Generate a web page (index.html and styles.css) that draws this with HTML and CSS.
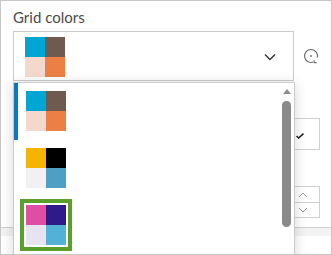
FILE: index.html
```html
<!DOCTYPE html>
<html lang="en">
<head>
  <meta charset="UTF-8" />
  <title>Grid colors</title>
  <link rel="stylesheet" href="styles.css">
</head>
<body>
  <div class="panel">
    <label class="field-label">Grid colors</label>

    <div class="field-row">
      <div class="select">
        <div class="swatch">
          <span style="background:#00a6d3"></span><span style="background:#6e5a4e"></span>
          <span style="background:#f3d8cb"></span><span style="background:#ea8046"></span>
        </div>
        <svg class="chevron" width="12" height="8" viewBox="0 0 12 8">
          <path d="M1 1.5 L6 6.5 L11 1.5" fill="none" stroke="#333" stroke-width="1.4"/>
        </svg>
      </div>
      <svg class="reset" width="16" height="16" viewBox="0 0 16 16">
        <path d="M14.3 9.6 A6.5 6.5 0 1 0 10.2 14.1" fill="none" stroke="#6b6b6b" stroke-width="1.1"/>
        <path d="M11 12.3 L11.3 14.6 L13.6 14.6" fill="none" stroke="#6b6b6b" stroke-width="1.1"/>
        <circle cx="8" cy="8" r="0.9" fill="#6b6b6b"/>
      </svg>
    </div>

    <!-- content underneath the open list -->
    <div class="under">
      <div class="checkbox">
        <svg width="8" height="6" viewBox="0 0 8 6">
          <path d="M0.5 3 L2.6 5 L7.5 0.6" fill="none" stroke="#222" stroke-width="1.5"/>
        </svg>
      </div>
      <div class="spinner">
        <div class="spin-btn">
          <svg width="10" height="6" viewBox="0 0 10 6"><path d="M1 5 L5 1 L9 5" fill="none" stroke="#9a9a9a" stroke-width="1"/></svg>
        </div>
        <div class="spin-btn">
          <svg width="10" height="6" viewBox="0 0 10 6"><path d="M1 1 L5 5 L9 1" fill="none" stroke="#9a9a9a" stroke-width="1"/></svg>
        </div>
      </div>
    </div>
    <div class="section-break"></div>

    <!-- open list -->
    <div class="dropdown">
      <div class="options">
        <div class="option active">
          <div class="swatch">
            <span style="background:#00a6d3"></span><span style="background:#6e5a4e"></span>
            <span style="background:#f3d8cb"></span><span style="background:#ea8046"></span>
          </div>
        </div>
        <div class="option">
          <div class="swatch">
            <span style="background:#f5b400"></span><span style="background:#000000"></span>
            <span style="background:#f1f1f1"></span><span style="background:#4f9fc4"></span>
          </div>
        </div>
        <div class="option focused">
          <div class="swatch">
            <span style="background:#e04ea3"></span><span style="background:#2e1a89"></span>
            <span style="background:#e6e4f1"></span><span style="background:#52b1d4"></span>
          </div>
        </div>
      </div>
      <div class="scrollbar">
        <div class="scroll-up"></div>
        <div class="scroll-thumb"></div>
      </div>
    </div>
  </div>
</body>
</html>
```

FILE: styles.css
```css
/* ======================
   Base
   ====================== */
*, *::before, *::after {
  box-sizing: border-box;
  margin: 0;
  padding: 0;
}
html, body {
  background-color: #fff;
  font-family: 'Lato', 'Liberation Sans', sans-serif;
  color: #4a4a4a;
}

/* ======================
   Panel
   ====================== */
.panel {
  position: relative;
  width: 332px;
  height: 255px;
  border: 1px solid #c6c6c6;
  padding: 6px 11px 0 12px;
  overflow: hidden;
  background-color: #fff;
}
.field-label {
  display: block;
  font-size: 15px;
  line-height: 20px;
  color: #4a4a4a;
}

/* ======================
   Select
   ====================== */
.field-row {
  display: flex;
  align-items: center;
  margin-top: 4px;
}
.select {
  display: flex;
  align-items: center;
  justify-content: space-between;
  width: 281px;
  height: 50px;
  padding: 2px 17px 0 11px;
  border: 1px solid #cacaca;
  background-color: #fff;
}
.chevron {
  display: block;
}
.reset {
  display: block;
  margin-left: 9px;
}

/* ======================
   Swatch
   ====================== */
.swatch {
  display: grid;
  grid-template-columns: 20px 20px;
  grid-template-rows: 20px 20px;
  width: 40px;
  height: 40px;
}

/* ======================
   Underlying controls
   ====================== */
.under {
  display: flex;
  flex-direction: column;
  align-items: flex-end;
}
.checkbox {
  width: 30px;
  height: 32px;
  margin-top: 37px;
  padding: 14px 0 0 5px;
  border: 1px solid #d0d0d0;
}
.checkbox svg {
  display: block;
}
.spinner {
  width: 36px;
  margin-top: 36px;
  border: 1px solid #d0d0d0;
}
.spin-btn {
  height: 15px;
  display: flex;
  align-items: center;
  padding-left: 13px;
}
.spin-btn + .spin-btn {
  border-top: 1px solid #d0d0d0;
}
.section-break {
  height: 9px;
  margin: 9px -11px 0 -12px;
  border-top: 1px solid #cfcfcf;
  background-color: #f3f3f3;
}

/* ======================
   Open list
   ====================== */
.dropdown {
  position: absolute;
  top: 81px;
  left: 12px;
  width: 282px;
  height: 200px;
  display: flex;
  border: 1px solid #cacaca;
  background-color: #fff;
  box-shadow: 0 2px 12px rgba(0, 0, 0, 0.16);
}
.options {
  flex: 1;
}
.option {
  height: 57px;
  padding: 8px 0 0 8px;
  border-left: 4px solid transparent;
}
.option.active {
  border-left-color: #0a79bf;
}
.option.focused .swatch {
  outline: 4px solid #5a9f2b;
  outline-offset: 2px;
}
.scrollbar {
  width: 9px;
  margin-right: 3px;
  display: flex;
  flex-direction: column;
  align-items: center;
}
.scroll-up {
  margin-top: 6px;
  width: 0;
  height: 0;
  border-left: 4.5px solid transparent;
  border-right: 4.5px solid transparent;
  border-bottom: 5px solid #8c8c8c;
}
.scroll-thumb {
  margin-top: 7px;
  width: 9px;
  height: 126px;
  border-radius: 5px;
  background-color: #8a8a8a;
}
```
